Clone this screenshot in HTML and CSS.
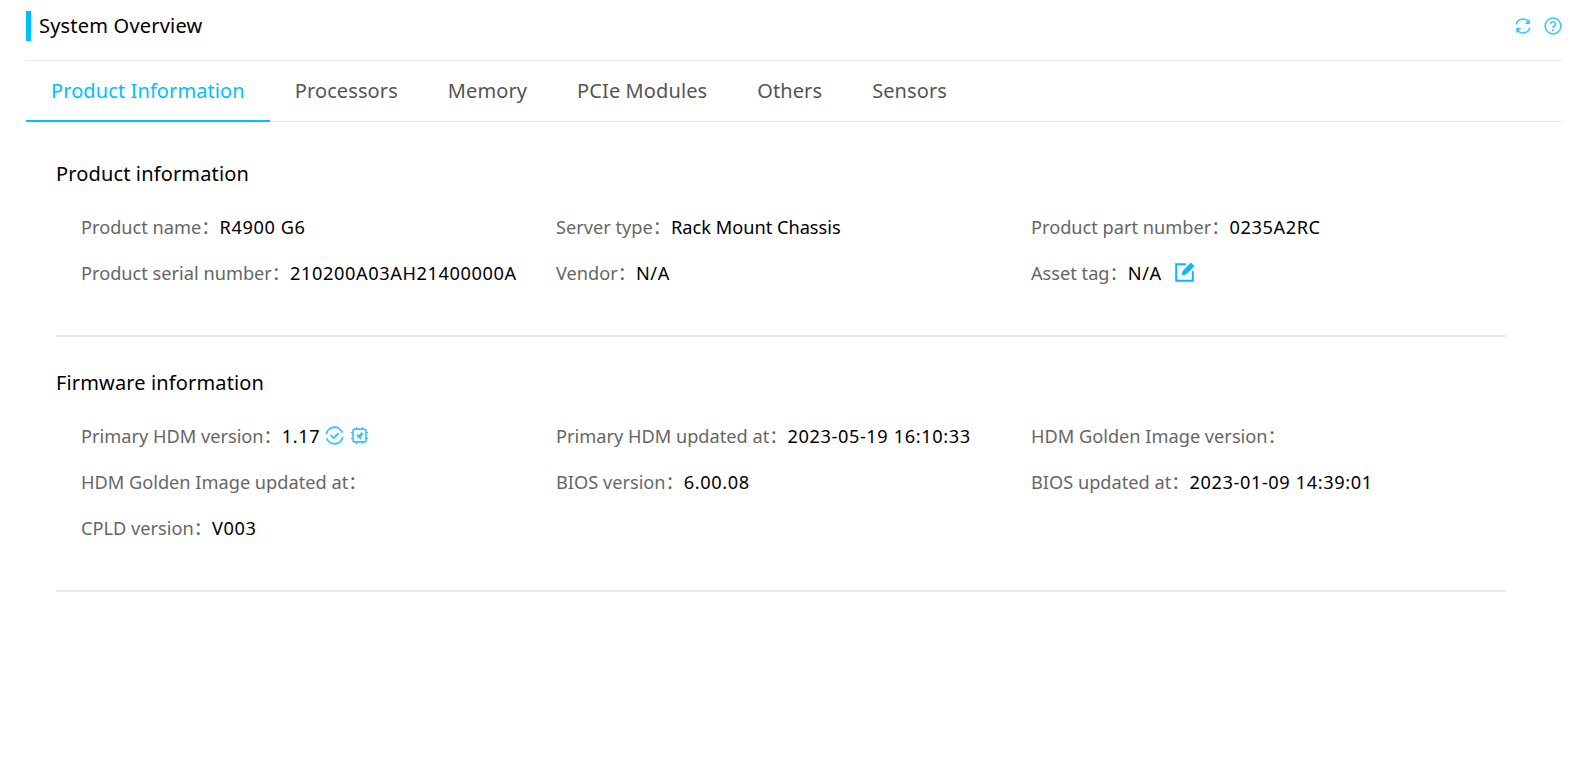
FILE: index.html
```html
<!DOCTYPE html>
<html lang="en">
<head>
<meta charset="utf-8">
<title>System Overview</title>
<link rel="stylesheet" href="styles.css">
</head>
<body>
<div class="page">
  <header class="head">
    <h1 class="title">System Overview</h1>
    <div class="tools">
      <svg class="tool" viewBox="0 0 18 18"><path d="M2.2 7.4A7 7 0 0 1 14.4 4.6M15.8 10.6A7 7 0 0 1 3.6 13.4"/><path class="fill" d="M15.8 2v5h-5zM2.2 16v-5h5z"/></svg>
      <svg class="tool" viewBox="0 0 18 18"><circle cx="9" cy="9" r="7.9"/><path d="M6.6 7a2.4 2.4 0 1 1 3.7 2c-.9.6-1.3 1-1.3 2"/><circle class="fill" cx="9" cy="13.3" r="1"/></svg>
    </div>
  </header>
  <nav class="tabs">
    <a class="tab active">Product Information</a>
    <a class="tab">Processors</a>
    <a class="tab">Memory</a>
    <a class="tab">PCIe Modules</a>
    <a class="tab">Others</a>
    <a class="tab">Sensors</a>
  </nav>
  <main class="content">
    <section class="section first">
      <h2 class="heading">Product information</h2>
      <div class="grid">
        <div class="item"><span class="label">Product name：</span><span class="value num">R4900 G6</span></div>
        <div class="item"><span class="label">Server type：</span><span class="value">Rack Mount Chassis</span></div>
        <div class="item"><span class="label">Product part number：</span><span class="value num">0235A2RC</span></div>
        <div class="item"><span class="label">Product serial number：</span><span class="value num">210200A03AH21400000A</span></div>
        <div class="item"><span class="label">Vendor：</span><span class="value num">N/A</span></div>
        <div class="item"><span class="label">Asset tag：</span><span class="value num">N/A</span>
          <svg class="ico edit" viewBox="0 0 20 20"><path d="M11 2.2H1.2v16.6h16.6V9"/><path class="fill" d="M15.8.6l3.6 3.6-8.4 8.4-4.4 1 1-4.6z"/></svg>
        </div>
      </div>
    </section>
    <section class="section">
      <h2 class="heading">Firmware information</h2>
      <div class="grid">
        <div class="item"><span class="label">Primary HDM version：</span><span class="value num">1.17</span>
          <svg class="ico check" viewBox="0 0 20 20"><path d="M1.4 8.6A8.7 8.7 0 0 1 18.2 7M18.6 11.4A8.7 8.7 0 0 1 1.8 13"/><path d="M5.8 9.4l3.4 3.2 5-5"/></svg>
          <svg class="ico chip" viewBox="0 0 20 20"><rect x="2.4" y="2.4" width="15.2" height="15.2" rx="2.4"/><path d="M6.5 0v2.4M13.5 0v2.4M6.5 17.6V20M13.5 17.6V20M0 6.5h2.4M0 13.5h2.4M17.6 6.5H20M17.6 13.5H20"/><path class="fill" d="M11.4 5l3.8 3.8-1.6.6-1.7 2.4.2 2.2-1.3.7-2-2.1-3 2.5 2.5-3-2-2 .7-1.3 2.2.2 2.4-1.7z"/></svg>
        </div>
        <div class="item"><span class="label">Primary HDM updated at：</span><span class="value num">2023-05-19 16:10:33</span></div>
        <div class="item"><span class="label">HDM Golden Image version：</span></div>
        <div class="item"><span class="label">HDM Golden Image updated at：</span></div>
        <div class="item"><span class="label">BIOS version：</span><span class="value num">6.00.08</span></div>
        <div class="item"><span class="label">BIOS updated at：</span><span class="value num">2023-01-09 14:39:01</span></div>
        <div class="item"><span class="label">CPLD version：</span><span class="value num">V003</span></div>
      </div>
    </section>
  </main>
</div>
</body>
</html>
```
FILE: styles.css
```css
* { box-sizing: border-box; }
html, body { margin: 0; height: 100%; background: #fff; }
body { font-family: "Noto Sans", "Noto Sans CJK SC", sans-serif; overflow: hidden; }
.page { padding: 0 22px 0 26px; }
.head {
  height: 61px;
  border-bottom: 1px solid #e8e8e8;
  display: flex;
  align-items: flex-start;
  justify-content: space-between;
  padding-top: 11px;
}
.title {
  margin: 0;
  height: 30px;
  line-height: 30px;
  border-left: 5px solid #00bfff;
  padding-left: 8px;
  font-size: 20px;
  letter-spacing: .2px;
  font-weight: 400;
  color: #000;
}
.tools { display: flex; gap: 12px; padding-top: 6px; }
.tool { width: 18px; height: 18px; }
svg path, svg circle, svg rect { fill: none; stroke: #33c5ff; stroke-width: 1.5; }
svg .fill { fill: #33c5ff; stroke: none; }
.tabs {
  display: flex;
  height: 61px;
  border-bottom: 1px solid #e8e8e8;
}
.tab {
  height: 61px;
  line-height: 60px;
  padding: 0 25px;
  font-size: 20px;
  letter-spacing: .1px;
  color: #555;
}
.tab.active { color: #00bfff; border-bottom: 2px solid #00bfff; }
.content { padding: 0 56px 0 30px; }
.section { border-bottom: 2px solid #e8e8e8; padding-bottom: 48px; }
.heading { margin: 0; padding-top: 35px; height: 89px; line-height: 33px; font-size: 20px; letter-spacing: .14px; font-weight: 400; color: #000; }
.section + .section .heading { height: 83px; padding-top: 29px; }
.grid { display: grid; grid-template-columns: repeat(3, 475px); padding-left: 25px; row-gap: 16px; }
.item { display: flex; align-items: baseline; height: 30px; line-height: 32px; font-size: 18.2px; white-space: nowrap; }
.label { color: #666; }
.value { color: #000; }
.num { letter-spacing: .6px; }
.ico { margin-left: 6px; height: 20px; width: 20px; align-self: center; }
.edit { margin-left: 13px; }
.edit path { stroke-width: 2; stroke: #00bfff; }
.edit .fill { fill: #00bfff; stroke: none; }
.check { margin-left: 5px; width: 19px; height: 19px; }
.check path { stroke-width: 2; }
.chip { margin-left: 7px; width: 17px; height: 17px; }
.chip rect { stroke-width: 2; }
```
